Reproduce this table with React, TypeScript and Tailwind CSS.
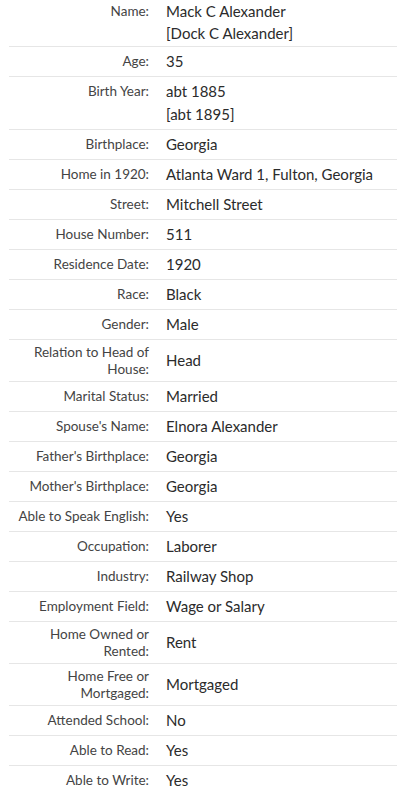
import React from "react";

type Row = { label: string[]; value: string[] };

const rows: Row[] = [
  { label: ["Name:"], value: ["Mack C Alexander", "[Dock C Alexander]"] },
  { label: ["Age:"], value: ["35"] },
  { label: ["Birth Year:"], value: ["abt 1885", "[abt 1895]"] },
  { label: ["Birthplace:"], value: ["Georgia"] },
  { label: ["Home in 1920:"], value: ["Atlanta Ward 1, Fulton, Georgia"] },
  { label: ["Street:"], value: ["Mitchell Street"] },
  { label: ["House Number:"], value: ["511"] },
  { label: ["Residence Date:"], value: ["1920"] },
  { label: ["Race:"], value: ["Black"] },
  { label: ["Gender:"], value: ["Male"] },
  { label: ["Relation to Head of", "House:"], value: ["Head"] },
  { label: ["Marital Status:"], value: ["Married"] },
  { label: ["Spouse's Name:"], value: ["Elnora Alexander"] },
  { label: ["Father's Birthplace:"], value: ["Georgia"] },
  { label: ["Mother's Birthplace:"], value: ["Georgia"] },
  { label: ["Able to Speak English:"], value: ["Yes"] },
  { label: ["Occupation:"], value: ["Laborer"] },
  { label: ["Industry:"], value: ["Railway Shop"] },
  { label: ["Employment Field:"], value: ["Wage or Salary"] },
  { label: ["Home Owned or", "Rented:"], value: ["Rent"] },
  { label: ["Home Free or", "Mortgaged:"], value: ["Mortgaged"] },
  { label: ["Attended School:"], value: ["No"] },
  { label: ["Able to Read:"], value: ["Yes"] },
  { label: ["Able to Write:"], value: ["Yes"] },
];

export default function App() {
  return (
    <div
      className="w-[414px] bg-white overflow-hidden"
      style={{ fontFamily: "Lato, 'Noto Sans', sans-serif" }}
    >
      <div className="ml-[9px] w-[388px]">
        {rows.map((r, i) => {
          const multiValue = r.value.length > 1;
          const first = i === 0;
          return (
            <div
              key={i}
              className={`flex border-b border-[#e6e6e6] ${multiValue ? "items-start" : "items-center"}`}
            >
              <div
                className={`w-[148px] shrink-0 pr-2 text-right text-[13.5px] text-[#444444] ${
                  first
                    ? "pt-0 leading-[22px]"
                    : multiValue
                    ? "py-[3px] leading-[23px]"
                    : "py-[4px] leading-[16.5px]"
                }`}
              >
                {r.label.map((l, j) => (
                  <div key={j}>{l}</div>
                ))}
              </div>
              <div
                className={`pl-[9px] text-[15px] text-[#2b2b2b] ${
                  first ? "pt-0 pb-[2px] leading-[22px]" : "py-[3px] leading-[23px]"
                }`}
              >
                {r.value.map((v, j) => (
                  <div key={j}>{v}</div>
                ))}
              </div>
            </div>
          );
        })}
      </div>
    </div>
  );
}
